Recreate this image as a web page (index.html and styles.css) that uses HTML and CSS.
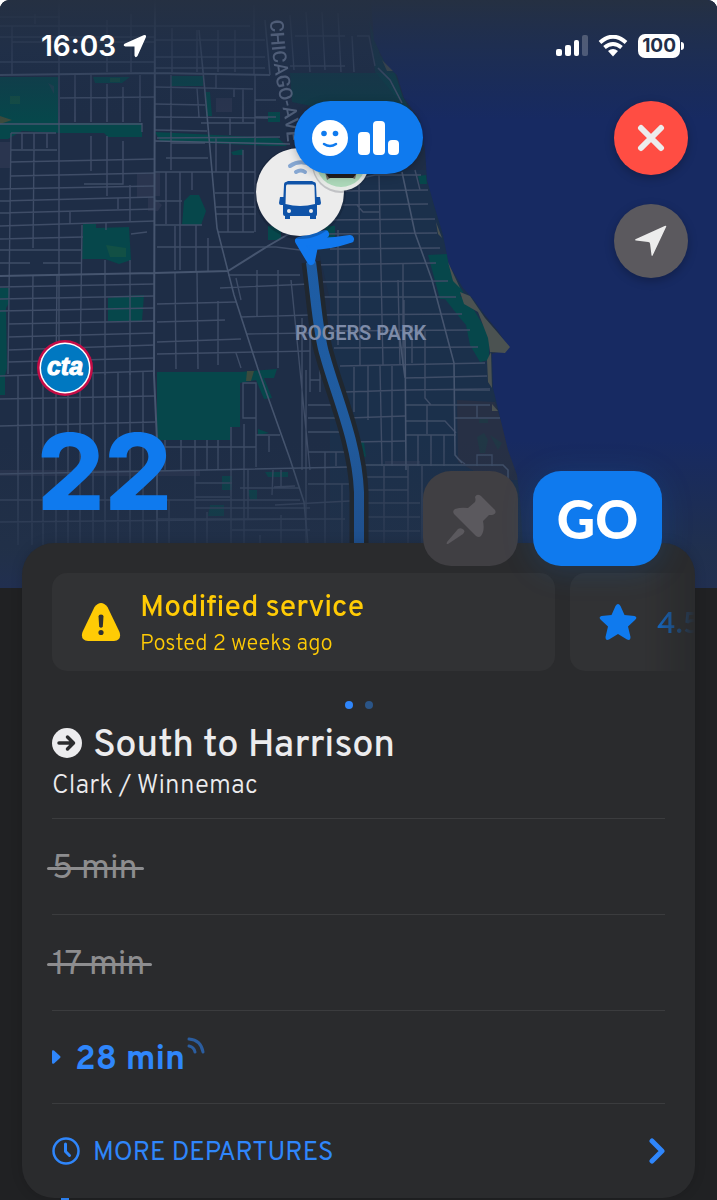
FILE: index.html
```html
<!DOCTYPE html>
<html lang="en">
<head>
    <meta charset="UTF-8">
    <meta name="viewport" content="width=device-width, initial-scale=1.0">
    <title>22 South to Harrison</title>
    <link rel="stylesheet" href="styles.css">
</head>
<body>
    <header class="hero">
        <svg class="map" viewBox="0 0 717 588" preserveAspectRatio="xMidYMin slice" aria-hidden="true">
            <defs>
                <linearGradient id="fade-top" x1="0" y1="0" x2="0" y2="1">
                    <stop offset="0" stop-color="#253042"/>
                    <stop offset="0.45" stop-color="#213049" stop-opacity="0.6"/>
                    <stop offset="1" stop-color="#1e2e48" stop-opacity="0"/>
                </linearGradient>
                <linearGradient id="fade-bottom" x1="0" y1="0" x2="0" y2="1">
                    <stop offset="0" stop-color="#223047" stop-opacity="0"/>
                    <stop offset="0.75" stop-color="#223149" stop-opacity="0.8"/>
                    <stop offset="1" stop-color="#212f50"/>
                </linearGradient>
                <linearGradient id="line-fade" gradientUnits="userSpaceOnUse" x1="0" y1="240" x2="0" y2="545">
                    <stop offset="0" stop-color="#1d5da6"/>
                    <stop offset="0.6" stop-color="#205b9e"/>
                    <stop offset="1" stop-color="#1f4f8c"/>
                </linearGradient>
            </defs>

            <rect width="717" height="588" fill="#1e2d46"/>
            <path fill="#1b304b" d="M300 170H430L480 300L520 480V588H330V300Z"/>

            <!-- parks -->
            <g fill="#06474b">
                <path d="M0 77H58V123H0ZM0 123H142V137H108L104 133H60L22 131L8 139H0ZM155 132L278 138L287 146H270L160 141Z"/>
                <path d="M93 77H130L122 83H95ZM171 76H203V86H171ZM205 92H210L212 116H206ZM268 112H280V122H268ZM231 152L243 149V155H233Z"/>
                <path d="M83 224H96V228L129 227L131 260L119 264L105 259H82ZM184 201L190 195H199L206 211L201 225H182ZM268 226H281V240H268ZM325 226H335V240H325Z"/>
                <path d="M0 288H9V303L6 308L7 368L5 375V395H0ZM108 298L122 296L144 295L142 321H108Z"/>
                <path d="M157 372H240L277 369L274 378H264L272 398L264 399L256 380L240 383V427H230V440H157Z"/>
                <path d="M258 429L269 433L258 435ZM222 476H232V490H222ZM265 472H288V477H268ZM210 505H224V516H208ZM248 490H257V500H250ZM356 442H364L366 457L360 456Z"/>
                <path d="M290 73H395L402 95L410 110H330L292 102Z" opacity="0.55"/>
                <path d="M369 20L380 55L395 73L402 95L399 100L375 72Z" opacity="0.5"/>
                <path d="M418 176L426 175L427 184H420ZM428 255L447 254L450 270L463 292L458 299H440ZM438 290L462 297L474 310L489 335V360L480 362L470 345L466 325L460 318Z"/>
                <path d="M477 437L484 433L488 440L485 453H480ZM490 435L502 443L498 450ZM479 419H488V423H479Z"/>
            </g>
            <path fill="#39405b" opacity="0.45" d="M0 142H10V168H0ZM137 173H160V196H153L162 205L158 211H148V197H137ZM216 98H232V112H216ZM48 83L54 86V94ZM0 470H200V476H0ZM385 461H420V466H385Z"/>
            <path fill="#2c3043" opacity="0.7" d="M457 400L495 402L520 480H490L458 462Z"/>
            <path fill="#125045" d="M10 96H20V104H10ZM110 78H120V82H110ZM106 245L126 248V257H110Z"/>
            <path fill="#3b4b3d" d="M0 116L12 120L0 124ZM247 371H254L251 381H246Z"/>

            <!-- lake -->
            <path fill="#172a62" d="M371 0L374 40L386 65L397 75L404 98L420 120L425 150L427 180L434 205L443 235L449 265L463 288L474 300L484 314L498 331L509 348L492 354L493 388L500 417L508 450L517 475L520 500L524 560L530 588H717V0Z"/>
            <path fill="#4b5251" d="M460 292L470 296L485 318L498 333L510 347L505 353L490 352L488 338L478 312L464 304ZM487 360L491 352L492 388L488 382ZM492 404L498 411H492ZM436 222L442 238L438 234ZM448 262L460 288L453 281ZM382 60L393 71H387Z"/>

            <!-- side streets -->
            <g fill="none" stroke="#3f4d67" stroke-width="1.4">
                <path d="M12 26V74M59 0V374M107 20V72M131 14V72M35 14V24M172 28V72M197 30V72M218 30V72M235 30V72M254 5V75M0 17H60M0 37H155M12 42H155M0 62H155M60 26H155M0 26H250M155 40H265M155 57H265M155 68H265"/>
                <path d="M290 15L294 70M306 12L310 72M322 12L325 70M338 13L341 72M352 36L354 72M357 36H369L375 66M290 66H345M295 36H345"/>
                <path d="M75 75V122M91 75V122M107 84V122M123 87V122M140 75V122M60 98L155 97M142 123V132M11 133H56M22 133V149M34 133V149M47 133V148M11 150H57"/>
                <path d="M11 133L8 374M34 150L33 248M11 162L155 159M11 176L155 173M0 189L155 186M0 201L155 197M0 213L155 209M0 226L155 221M0 239L83 237M0 250H82M0 263H30M43 263H82M0 287L155 284M0 299L155 296M0 311L155 308M8 324L155 321M8 337L155 333M8 350L155 345M8 362L155 358"/>
                <path d="M91 136V171M107 136V196M123 141V184H84M118 198V209M70 212V223M106 222V230M130 197V222M131 234L147 232M105 260V375M82 225L80 374M57 275L56 374M33 275L32 374M130 260V375M130 197V185"/>
                <path d="M0 376L155 371M0 399L155 396M0 426L155 422M18 375V545M32 372V545M43 372V545M56 372V545M68 372V545M80 372V545M93 372V545M105 372V545M118 372V545M130 372V545M143 372V545M0 500H300M0 522L310 519"/>
                <path d="M155 87L253 89M171 75V170M197 88L199 117M216 75V88M155 104L205 105M155 117L268 118M155 130L207 131M201 123H255M230 118V135M157 138L280 137M171 143H205M166 158H208M171 143V170M155 172L255 172M166 172V224M180 172V270M192 172V190M155 201H182M155 225H202M157 247H276M175 226V270M196 225V271M208 238V271M255 75V232M243 88V122M234 88V97M255 100H276M255 117H276M216 138V172M230 142V172M243 150V232M228 172V232M215 193H256M216 207H256M216 214H256M218 232H254"/>
                <path d="M175 272L176 369M197 271L198 369M218 301V365M236 278L241 300M257 270V317M278 270V368M157 304L236 302M157 322L225 320M157 342L241 339M157 354L310 351M241 317L310 315M246 334L310 333M236 353L241 368M220 288L310 284M228 275L300 275"/>
                <path d="M243 383H256V418H243ZM157 447H256M165 440V470M181 440V470M195 440V545M207 440V470M218 440V470M231 427V545M244 424V545M256 399V467M269 436V452M256 435H280M281 470V487M274 487L295 486M195 483H232M195 497H230M240 488H300M275 505L350 501M195 508H310M157 519H345M248 470V520M273 470L272 495M232 530H310M260 535V545M281 515V545M207 512V545M169 500V545"/>
                <path d="M302 318V470M306 370V545M310 380H320M310 392V318M308 405H331M308 418H336M308 432H343M308 452H345M325 452V466M336 452V466M320 368V392M354 367V412M308 484H350M325 466V545M342 484V545M291 280L310 470"/>
                <path d="M276 247L300 250M310 265L436 263M325 220L435 219M335 205L428 204M340 191L428 190M322 234L437 233M330 249L440 248M312 282L448 281M315 297L456 297M322 315L462 314M328 331L470 330M334 348L478 347M340 366L485 363"/>
                <path d="M338 230V345M359 183L360 365M357 205L363 212H379M379 175L383 365M403 263V365M398 280L400 365M415 170L420 190M353 180L375 175H421M425 335V398L431 405H490M425 330V366M368 366V420M380 366L382 466M392 366V466M405 378L487 376M405 390L490 389M405 405H431M405 421H445L456 433M345 392L405 390M348 418L405 416M355 442L405 441M427 405V434M405 435H456M418 435V466M431 435V466M444 435V466M455 390H490M455 418H500M477 405V418M477 466V455L480 455H492V466M457 458L465 464M366 477H408M366 490H408M366 503H420M366 517H420M366 531H420M384 466V545M408 466V545M422 466V545M412 325V363M404 300V347"/>
            </g>

            <!-- main roads -->
            <g fill="none" stroke="#46556f" stroke-width="2">
                <path d="M155 0L154 375L157 440V545M0 75L155 73L270 75M0 276L154 273L228 271L268 246L292 232"/>
                <path stroke-width="1.6" d="M199 30L205 92L211 160L217 228L234 295L258 369L290 459L304 502L308 545M265 20L270 75M0 474L155 471L350 467"/>
                <path stroke-width="1.6" d="M357 465L503 465L508 470V480M378 68L390 80L402 103M402 172L415 233L432 280L454 363L455 455L462 463M0 124H142M155 141L290 144M405 330L406 470M400 340L405 378"/>
            </g>

            <rect width="717" height="120" fill="url(#fade-top)"/>
            <rect y="440" width="717" height="148" fill="url(#fade-bottom)"/>

            <path id="ave" d="M270 20Q272 70 283 110Q288 132 289 180" fill="none"/>
            <text class="street-name"><textPath href="#ave">CHICAGO-AVE</textPath></text>

            <!-- route line -->
            <path d="M311 262C316 300 318 335 325 356C335 393 357 442 359 492V545" fill="none" stroke="#20272f" stroke-width="19"/>
            <path d="M311 262C316 300 318 335 325 356C335 393 357 442 359 492V545" fill="none" stroke="url(#line-fade)" stroke-width="10"/>
            <path d="M325 234L299 241L311 261L314 246Q332 245 350 239Q328 243 306 241" fill="#1178ee" stroke="#1178ee" stroke-width="8" stroke-linecap="round" stroke-linejoin="round"/>
            <text class="area-name" x="295" y="340">ROGERS PARK</text>

            <!-- bus marker -->
            <circle cx="300" cy="193" r="46" fill="#0b1524" opacity="0.25"/>
            <circle cx="300" cy="192" r="44" fill="#ececec"/>
            <circle cx="341" cy="164" r="29" fill="#17202c" opacity="0.2"/>
            <circle cx="341" cy="163" r="28" fill="#e6eae6"/>
            <circle cx="341" cy="162" r="25" fill="#abd7b8"/>
            <path d="M322 160H360L355 179L350 177H332L327 180Z" fill="#756d68"/>
            <path d="M326 174H356L353 178H329Z" fill="#231f20"/>
            <g fill="none" stroke="#86a7d2" stroke-width="4" stroke-linecap="round">
                <path d="M290 166Q300 159 312 165M296 172Q301 169 305 172"/>
            </g>
            <g fill="#0f53a8">
                <path d="M288 181H312L314 182Q316 182 316 185L317 205V214Q317 216 316 216V219H310V216H290V219H285V216Q283 216 283 214V205L284 185Q284 182 286 182Z"/>
                <path d="M280 197H284V205H281Q279 205 279 203ZM316 197H320L321 203Q321 205 319 205H316Z"/>
            </g>
            <path d="M287 184.500H313Q314.500 184.500 314.500 187L315 204Q300 208 285.500 204L286 187Q286 184.500 287 184.500Z" fill="#ececec"/>
            <circle cx="289" cy="211" r="2" fill="#ececec"/>
            <circle cx="311" cy="211" r="2" fill="#ececec"/>
        </svg>

        <div class="status-bar">
            <div class="clock">
                <span>16:03</span>
                <svg width="24" height="24" viewBox="0 0 24 24" aria-hidden="true"><path d="M23 3L14.500 22Q12.500 24.500 11.500 21.500V12.500H2.500Q-.5 12 1.500 9.800L20.500 1.200Q23.500 .5 23 3Z" fill="#fff"/></svg>
            </div>
            <div class="signals">
                <svg width="32" height="22" viewBox="0 0 32 22" aria-hidden="true">
                    <g fill="#fff">
                        <rect y="14" width="6" height="7" rx="2"/>
                        <rect x="9" y="10" width="6" height="11" rx="2"/>
                        <rect x="18" y="5" width="5" height="16" rx="2"/>
                        <rect x="26" width="6" height="21" rx="2" opacity="0.22"/>
                    </g>
                </svg>
                <svg width="30" height="22" viewBox="0 0 30 22" aria-hidden="true">
                    <path d="M2 7.500Q15-4 28 7.500M6.500 12.500Q15 5.500 23.500 12.500" fill="none" stroke="#fff" stroke-width="4"/>
                    <path d="M10 16Q15 12 20 16L15 21.500Z" fill="#fff"/>
                </svg>
                <span class="battery">100</span>
            </div>
        </div>

        <button class="crowd-pill" type="button" aria-label="Rider reports">
            <svg width="36" height="36" viewBox="0 0 36 36" aria-hidden="true">
                <circle cx="18" cy="18" r="18" fill="#fff"/>
                <circle cx="12" cy="13.500" r="2.800" fill="#0f7aee"/>
                <circle cx="23.500" cy="13.500" r="2.800" fill="#0f7aee"/>
                <path d="M12 24Q18 28 24 24" fill="none" stroke="#0f7aee" stroke-width="2.500" stroke-linecap="round"/>
            </svg>
            <svg width="42" height="34" viewBox="0 0 42 34" fill="#fff" aria-hidden="true">
                <rect y="11" width="12" height="23" rx="4"/>
                <rect x="15" width="12" height="34" rx="4"/>
                <rect x="30" y="19" width="11" height="15" rx="4"/>
            </svg>
        </button>

        <div class="map-controls">
            <button class="round-btn close" type="button" aria-label="Close">
                <svg width="28" height="28" viewBox="0 0 28 28" aria-hidden="true"><path d="M4 4L24 24M24 4L4 24" stroke="#ececec" stroke-width="6" stroke-linecap="round"/></svg>
            </button>
            <button class="round-btn locate" type="button" aria-label="My location">
                <svg width="34" height="32" viewBox="0 0 36 34" aria-hidden="true"><path d="M34 2L20 32Q19 34 18.500 32L17 20Q17 18 15 18L2 16.500Q0 16 2 15L32.500 1Q35 0 34 2Z" fill="#ececec"/></svg>
            </button>
        </div>

        <div class="hero-bottom">
            <div class="route">
                <svg class="agency" viewBox="0 0 56 56" role="img" aria-label="cta">
                    <circle cx="28" cy="28" r="28" fill="#c60c46"/>
                    <circle cx="28" cy="28" r="25.500" fill="#fff"/>
                    <circle cx="28" cy="28" r="24" fill="#0078c1"/>
                    <text class="agency-text" x="28" y="35" text-anchor="middle">cta</text>
                </svg>
                <h1 class="route-number">22</h1>
            </div>
            <div class="actions">
                <button class="pin-btn" type="button" aria-label="Pin line">
                    <svg width="50" height="50" viewBox="0 0 50 50" fill="#5b595e" aria-hidden="true">
                        <path d="M29 3Q31-1 35 2L49 16Q51 20 46 21L43 21L37 27Q39 37 35 42Q33 44 30 42L8 20Q6 17 9 15Q15 13 22 14L29 8Q30 6 29 3Z"/>
                        <path d="M12 35Q15 33 18 36Q19 38 17 40L2 50Q0 51 1 48Z"/>
                    </svg>
                </button>
                <button class="go-btn" type="button">GO</button>
            </div>
        </div>
    </header>

    <main class="sheet">
        <div class="notices">
            <a class="notice alert" href="#">
                <svg class="notice-icon" width="40" height="38" viewBox="0 0 40 38" aria-hidden="true">
                    <path d="M13.500 4Q20-4 26.500 4L38.500 29Q41 37 33 38H7Q-1 37 1.500 29Z" fill="#ffcb05"/>
                    <path d="M17.500 13.500Q17.500 11.500 20 11.500Q22.500 11.500 22.500 13.500L21.800 23.500Q20 26 18.200 23.500Z" fill="#2f3032"/>
                    <circle cx="20" cy="29.500" r="2.600" fill="#2f3032"/>
                </svg>
                <span class="notice-text">
                    <strong>Modified service</strong>
                    <small>Posted 2 weeks ago</small>
                </span>
            </a>
            <a class="notice rating" href="#">
                <svg class="notice-icon" width="38" height="38" viewBox="0 0 38 38" aria-hidden="true"><path d="M16.500 3Q19-1 21.500 3L25.500 12L35.500 13Q39 14 36 17L29 23.500L31.500 34Q31.500 38 28 36.500L19 31L10 36.500Q6.500 38 6.500 34L9 23.500L2 17Q-1 14 2.500 13L12.500 12Z" fill="#0f7aee"/></svg>
                <span>4.5</span>
            </a>
        </div>

        <div class="dots"><span class="dot active"></span><span class="dot"></span></div>

        <section class="direction">
            <h2>
                <svg width="30" height="30" viewBox="0 0 30 30" aria-hidden="true">
                    <circle cx="15" cy="15" r="15" fill="#ececee"/>
                    <path d="M7 15H21M15.500 9L21.500 15L15.500 21" fill="none" stroke="#2a2b2d" stroke-width="3.500" stroke-linecap="round" stroke-linejoin="round"/>
                </svg>
                <span>South to Harrison</span>
            </h2>
            <p>Clark / Winnemac</p>
        </section>

        <ul class="departures">
            <li><s>5 min</s></li>
            <li><s>17 min</s></li>
            <li class="next">
                <svg width="9" height="14" viewBox="0 0 9 14" aria-hidden="true"><path d="M0 1.500Q0-.5 2 .5L8 6Q9 7 8 8L2 13.500Q0 14.500 0 12.500Z" fill="#2f86fb"/></svg>
                <b>28 min</b>
                <svg class="live" width="18" height="18" viewBox="0 0 18 18" aria-hidden="true"><path d="M2 9Q7 10 8 15M2 2Q14 3 16 15" fill="none" stroke="#2b5d9f" stroke-width="3" stroke-linecap="round"/></svg>
            </li>
        </ul>

        <a class="more" href="#">
            <svg width="28" height="28" viewBox="0 0 28 28" fill="none" stroke="#2f86fb" aria-hidden="true">
                <circle cx="14" cy="14" r="12.500" stroke-width="2.500"/>
                <path d="M13.500 7V14.500L17.500 18.500" stroke-width="3" stroke-linecap="round" stroke-linejoin="round"/>
            </svg>
            <span>MORE DEPARTURES</span>
            <svg width="16" height="26" viewBox="0 0 16 26" aria-hidden="true"><path d="M3 3L13 13L3 23" fill="none" stroke="#2f86fb" stroke-width="5" stroke-linecap="round" stroke-linejoin="round"/></svg>
        </a>
    </main>
    <div class="stop-line"></div>
</body>
</html>
```
FILE: styles.css
```css
:root {
    --page: #202123;
    --sheet: #2a2b2d;
    --tile: #313234;
    --divider: #3b3c3e;
    --text: #ececee;
    --muted: #8d8d8f;
    --blue: #0f7aee;
    --link: #2f86fb;
    --yellow: #ffcb05;
}

* {
    box-sizing: border-box;
}

html {
    background: #fff;
}

body {
    margin: 0;
    background: var(--page);
    border-radius: 9px 9px 0 0;
    overflow-x: hidden;
    font-family: Overpass, Inter, Roboto, sans-serif;
    color: var(--text);
}

button {
    border: 0;
    padding: 0;
    display: flex;
    align-items: center;
    justify-content: center;
    cursor: pointer;
}

a {
    text-decoration: none;
}

svg {
    flex: none;
}

/* map header */
.hero {
    position: relative;
    padding: 32px 29px 22px 37px;
}

.map {
    position: absolute;
    inset: 0;
    width: 100%;
    height: 100%;
    border-radius: 9px 9px 0 0;
}

.street-name {
    font: 500 19px Roboto, sans-serif;
    fill: #5f6d88;
    opacity: 0.75;
}

.area-name {
    font: 600 20px Roboto, sans-serif;
    fill: #7d8ba8;
}

.status-bar {
    position: relative;
    display: flex;
    justify-content: space-between;
    align-items: center;
    height: 28px;
    padding: 0 8px 0 4px;
}

.clock {
    display: flex;
    align-items: center;
    gap: 7px;
    font: 600 28px/28px Inter, sans-serif;
    color: #fff;
}

.signals {
    display: flex;
    align-items: center;
    gap: 10px;
}

.battery {
    position: relative;
    height: 24px;
    padding: 0 4px;
    border-radius: 7px;
    background: #fff;
    color: #212f4a;
    font: 700 19px/24px Inter, sans-serif;
}

.battery::after {
    content: '';
    position: absolute;
    left: calc(100% + 1px);
    top: 8px;
    width: 3px;
    height: 8px;
    border-radius: 0 4px 4px 0;
    background: #fff;
}

.crowd-pill {
    position: absolute;
    left: 41%;
    top: 101px;
    width: 129px;
    height: 73px;
    padding-right: 4px;
    gap: 10px;
    border-radius: 37px;
    background: var(--blue);
    box-shadow: 0 2px 8px rgba(0, 0, 0, 0.25);
}

.map-controls {
    position: relative;
    display: flex;
    flex-direction: column;
    align-items: flex-end;
    gap: 29px;
    margin-top: 41px;
}

.round-btn {
    width: 74px;
    height: 74px;
    border-radius: 50%;
    box-shadow: 0 3px 10px rgba(0, 0, 0, 0.25);
}

.close {
    background: #ff4d43;
}

.locate {
    background: #5b595e;
}

.hero-bottom {
    position: relative;
    z-index: 2;
    display: flex;
    justify-content: space-between;
    align-items: flex-end;
    margin-top: 62px;
    padding-right: 26px;
}

.route {
    padding-bottom: 56px;
}

.agency {
    display: block;
    width: 56px;
    height: 56px;
}

.agency-text {
    font: italic 700 25px "Liberation Sans", sans-serif;
    fill: #fff;
    stroke: #fff;
    stroke-width: 1px;
}

.route-number {
    margin: 37px 0 0;
    font: 800 106px/77px Inter, sans-serif;
    color: var(--blue);
}

.actions {
    display: flex;
    gap: 15px;
}

.pin-btn,
.go-btn {
    height: 95px;
    border-radius: 28px;
}

.pin-btn {
    width: 95px;
    background: #403f43;
}

.go-btn {
    width: 129px;
    background: var(--blue);
    color: #fff;
    font: 900 53px/60px Lato, sans-serif;
    box-shadow: 0 4px 32px rgba(15, 122, 238, 0.18);
}

/* details sheet */
.sheet {
    position: relative;
    z-index: 1;
    margin: -45px 22px 0;
    padding: 30px 30px 0;
    border-radius: 32px;
    background: var(--sheet);
    box-shadow: 0 0 12px rgba(0, 0, 0, 0.15);
}

.notices {
    display: flex;
    gap: 15px;
    margin-right: -30px;
    overflow: hidden;
    mask-image: linear-gradient(to right, #000 calc(100% - 50px), transparent);
}

.notice {
    display: flex;
    align-items: center;
    height: 98px;
    border-radius: 15px;
    background: var(--tile);
    padding-left: 29px;
}

.alert {
    flex: 1;
    gap: 19px;
    color: var(--yellow);
}

.notice-text {
    display: flex;
    flex-direction: column;
    padding-top: 6px;
}

.notice-text strong {
    font-weight: 500;
    font-size: 30px;
    line-height: 40px;
}

.notice-text small {
    font-weight: 300;
    font-size: 22px;
    line-height: 32px;
}

.rating {
    flex: 0 0 125px;
    min-width: 0;
    gap: 20px;
    border-radius: 15px 0 0 15px;
    color: var(--blue);
    font-weight: 500;
    font-size: 30px;
}

.rating span {
    padding-top: 6px;
}

.dots {
    display: flex;
    justify-content: center;
    gap: 12px;
    margin-top: 30px;
}

.dot {
    width: 8px;
    height: 8px;
    border-radius: 50%;
    background: #2b5587;
}

.dot.active {
    background: var(--link);
}

.direction {
    padding: 12px 0 13px;
}

.direction h2 {
    display: flex;
    align-items: center;
    gap: 11px;
    height: 44px;
    margin: 0;
    font-weight: 500;
    font-size: 38px;
}

.direction h2 span {
    padding-top: 6px;
}

.direction p {
    margin: 4px 0 0;
    font-weight: 300;
    font-size: 26px;
    line-height: 36px;
}

.departures {
    list-style: none;
    margin: 0;
    padding: 0;
}

.departures li {
    display: flex;
    align-items: center;
    height: 96px;
    border-top: 1px solid var(--divider);
    font-size: 34px;
}

.departures s,
.departures b {
    padding-top: 6px;
}

.departures s {
    position: relative;
    color: var(--muted);
    text-decoration: none;
}

.departures s::after {
    content: '';
    position: absolute;
    left: -5px;
    right: -6px;
    top: 50%;
    height: 3px;
    border-radius: 2px;
    background: var(--muted);
}

.departures .next {
    height: 93px;
    gap: 14px;
    color: var(--link);
}

.live {
    align-self: flex-start;
    margin: 26px 0 0 -12px;
}

.more {
    display: flex;
    align-items: center;
    gap: 13px;
    height: 95px;
    border-top: 1px solid var(--divider);
    color: var(--link);
    font-size: 26px;
}

.more span {
    flex: 1;
    padding-top: 4px;
}

.stop-line {
    width: 8px;
    height: 2px;
    margin-left: 61px;
    background: var(--link);
}
```
